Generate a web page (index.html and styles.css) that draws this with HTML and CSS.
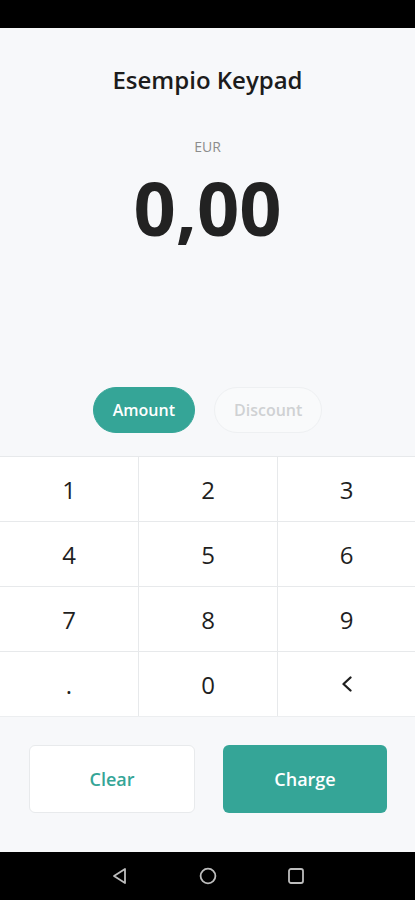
FILE: index.html
```html
<!DOCTYPE html>
<html lang="it">
<head>
  <meta charset="UTF-8" />
  <meta name="viewport" content="width=device-width, initial-scale=1.0" />
  <title>Esempio Keypad</title>
  <link rel="stylesheet" href="styles.css">
</head>
<body>
  <div class="status-bar"></div>

  <main class="screen">
    <h1 class="title">Esempio Keypad</h1>

    <div class="display">
      <div class="currency">EUR</div>
      <div class="amount">0,00</div>
    </div>

    <div class="modes">
      <button class="mode active" type="button">Amount</button>
      <button class="mode" type="button">Discount</button>
    </div>

    <div class="keypad">
      <button class="key" type="button">1</button>
      <button class="key" type="button">2</button>
      <button class="key" type="button">3</button>
      <button class="key" type="button">4</button>
      <button class="key" type="button">5</button>
      <button class="key" type="button">6</button>
      <button class="key" type="button">7</button>
      <button class="key" type="button">8</button>
      <button class="key" type="button">9</button>
      <button class="key" type="button">.</button>
      <button class="key" type="button">0</button>
      <button class="key" type="button" aria-label="Cancella">
        <svg class="back-icon" viewBox="0 0 12 16" width="12" height="16">
          <polyline points="9.5,1.5 2.5,8 9.5,14.5" fill="none" stroke="#1f1f1f" stroke-width="2.3" stroke-linecap="round" stroke-linejoin="round" />
        </svg>
      </button>
    </div>

    <div class="actions">
      <button class="action clear" type="button">Clear</button>
      <button class="action charge" type="button">Charge</button>
    </div>
  </main>

  <nav class="nav-bar">
    <svg viewBox="0 0 18 18" width="18" height="18">
      <polygon points="14,2 14,16 3,9" fill="none" stroke="#bdbdbd" stroke-width="1.8" stroke-linejoin="round" />
    </svg>
    <svg viewBox="0 0 18 18" width="18" height="18">
      <circle cx="9" cy="9" r="7.4" fill="none" stroke="#bdbdbd" stroke-width="1.8" />
    </svg>
    <svg viewBox="0 0 18 18" width="18" height="18">
      <rect x="2" y="2" width="14" height="14" rx="2" fill="none" stroke="#bdbdbd" stroke-width="1.8" />
    </svg>
  </nav>
</body>
</html>
```

FILE: styles.css
```css
* {
  box-sizing: border-box;
}
body {
  margin: 0;
  font-family: "Open Sans", "Noto Sans", sans-serif;
  background-color: #000;
}
button {
  font-family: inherit;
  border: none;
  background: none;
  padding: 0;
  cursor: pointer;
}
.status-bar {
  height: 28px;
  background-color: #000;
}
.screen {
  height: 824px;
  background-color: #f7f8fa;
  padding-top: 36px;
  display: flex;
  flex-direction: column;
}
.title {
  margin: 0;
  font-size: 24px;
  line-height: 32px;
  font-weight: 600;
  color: #1c1c1c;
  text-align: center;
}
.display {
  margin-top: 43px;
  text-align: center;
}
.currency {
  font-size: 14px;
  line-height: 16px;
  color: #8c8c8c;
}
.amount {
  margin-top: 5px;
  font-size: 74px;
  line-height: 96px;
  font-weight: 700;
  color: #222;
}
.modes {
  margin-top: 131px;
  display: flex;
  justify-content: center;
  gap: 19px;
}
.mode {
  height: 46px;
  padding: 0 19px;
  border-radius: 23px;
  font-size: 16px;
  font-weight: 600;
  color: #cfd1d3;
  background-color: #f9fafb;
  border: 1px solid #eef0f2;
}
.mode.active {
  color: #fff;
  background-color: #35a597;
  border-color: #35a597;
}
.keypad {
  margin-top: 23px;
  display: grid;
  grid-template-columns: 138px 138px 1fr;
  gap: 1px;
  background-color: #e7e9eb;
  border-top: 1px solid #e7e9eb;
  border-bottom: 1px solid #eceef0;
}
.key {
  height: 64px;
  background-color: #fff;
  font-size: 24px;
  color: #1f1f1f;
  display: flex;
  align-items: center;
  justify-content: center;
}
.back-icon {
  display: block;
}
.actions {
  margin-top: 28px;
  padding: 0 28px 0 29px;
  display: flex;
  gap: 28px;
}
.action {
  flex: 1;
  height: 68px;
  border-radius: 6px;
  font-size: 18px;
  font-weight: 600;
}
.clear {
  background-color: #fff;
  color: #35a597;
  border: 1px solid #e8eaec;
}
.charge {
  background-color: #35a597;
  color: #fff;
}
.nav-bar {
  height: 48px;
  background-color: #000;
  display: flex;
  justify-content: center;
  align-items: center;
  gap: 70px;
}
```
